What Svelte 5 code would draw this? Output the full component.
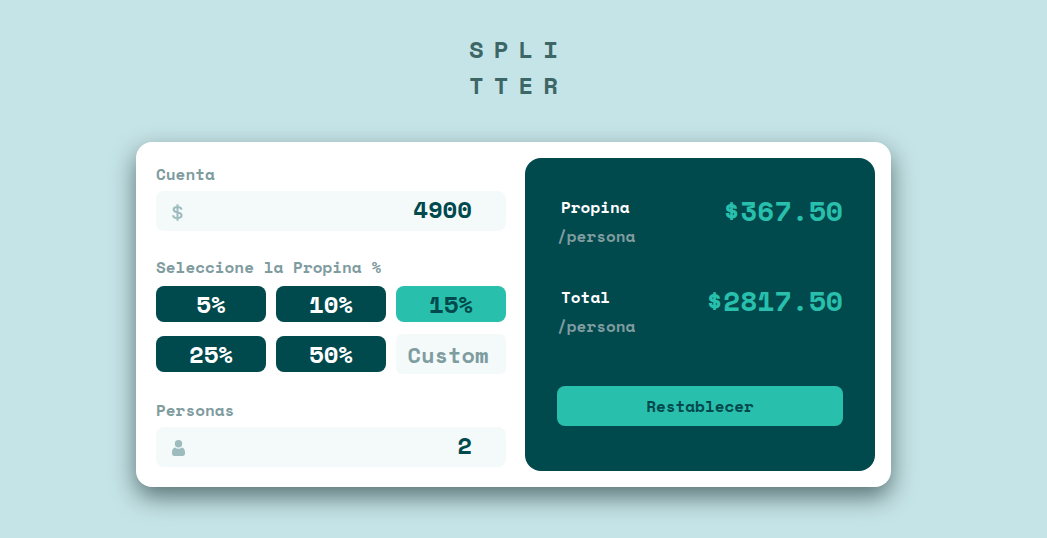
<script>
  let bill = $state(4900);
  let people = $state(2);
  let tip = $state(15);
  let custom = $state('');

  const tips = [5, 10, 15, 25, 50];

  let rate = $derived((custom === '' || custom === null ? tip : Number(custom)) / 100);
  let tipEach = $derived(people > 0 ? (bill * rate) / people : 0);
  let totalEach = $derived(people > 0 ? bill / people + tipEach : 0);

  function choose(value) {
    tip = value;
    custom = '';
  }

  function reset() {
    bill = 0;
    people = 1;
    tip = 0;
    custom = '';
  }
</script>

<main class="page">
  <h1 class="logo">SPLI<br />TTER</h1>

  <div class="card">
    <form class="form" onsubmit={(e) => e.preventDefault()}>
      <div class="group">
        <label class="label" for="bill">Cuenta</label>
        <div class="field">
          <svg class="icon" width="11" height="17" viewBox="0 0 11 17" aria-hidden="true">
            <path
              d="M9.500 5.700C9.300 3.800 7.800 3 5.500 3 3.200 3 1.600 3.900 1.600 5.600c0 1.800 1.600 2.400 3.900 2.800 2.500.4 4.100 1.100 4.100 2.900 0 1.800-1.700 2.800-4.100 2.800S1.200 13.200 1.100 11.200M5.500 .3v16.500"
              fill="none"
              stroke="currentColor"
              stroke-width="2"
            />
          </svg>
          <input id="bill" type="number" min="0" bind:value={bill} />
        </div>
      </div>

      <fieldset class="group">
        <legend class="label">Seleccione la Propina %</legend>
        <div class="tips">
          {#each tips as value}
            <button
              type="button"
              class="tip"
              class:active={tip === value}
              aria-pressed={tip === value}
              onclick={() => choose(value)}>{value}%</button
            >
          {/each}
          <input class="custom" type="number" min="0" placeholder="Custom" aria-label="Custom" bind:value={custom} />
        </div>
      </fieldset>

      <div class="group">
        <label class="label" for="people">Personas</label>
        <div class="field">
          <svg class="icon" width="13" height="16" viewBox="0 0 13 16" aria-hidden="true">
            <circle cx="6.500" cy="3.700" r="3.700" fill="currentColor" />
            <path
              d="M3.100 7.500C1.200 7.900 0 9.700 0 12.300v1.300C0 15 .9 16 2.300 16h8.400c1.400 0 2.300-1 2.300-2.400v-1.300c0-2.600-1.200-4.400-3.100-4.800-.9.800-2.100 1.200-3.400 1.200S4 8.300 3.100 7.500z"
              fill="currentColor"
            />
          </svg>
          <input id="people" type="number" min="1" bind:value={people} />
        </div>
      </div>
    </form>

    <section class="panel">
      <div class="result">
        <div>
          <p class="name">Propina</p>
          <p class="unit">/persona</p>
        </div>
        <output class="amount" for="bill people">${tipEach.toFixed(2)}</output>
      </div>
      <div class="result">
        <div>
          <p class="name">Total</p>
          <p class="unit">/persona</p>
        </div>
        <output class="amount" for="bill people">${totalEach.toFixed(2)}</output>
      </div>
      <button type="button" class="reset" onclick={reset}>Restablecer</button>
    </section>
  </div>
</main>

<style>
  :global(body) {
    background: #c5e4e7;
  }

  .page,
  .page * {
    box-sizing: border-box;
  }

  .page {
    display: flex;
    flex-direction: column;
    align-items: center;
    gap: 39px;
    padding: 31px 20px 48px 0;
    font: bold 16px/24px "Space Mono", "Liberation Mono", monospace;
    color: #00494d;
  }

  input,
  button {
    font: inherit;
    color: inherit;
    border: 0;
    min-width: 0;
  }

  input {
    appearance: textfield;
  }

  input::-webkit-inner-spin-button {
    appearance: none;
    margin: 0;
  }

  button {
    cursor: pointer;
    padding: 0;
  }

  p {
    margin: 0;
  }

  .logo {
    margin: 0;
    padding-left: 10px;
    font-size: 24px;
    line-height: 36px;
    letter-spacing: 10px;
    color: #3d6666;
  }

  .card {
    display: grid;
    grid-template-columns: repeat(2, minmax(0, 1fr));
    gap: 19px;
    width: 100%;
    max-width: 755px;
    padding: 16px 16px 16px 20px;
    background: #fff;
    border-radius: 16px;
    box-shadow: 0 10px 25px rgba(0, 20, 20, 0.55);
  }

  .form {
    display: flex;
    flex-direction: column;
    gap: 24px;
    padding: 4px 0;
  }

  .group {
    display: flex;
    flex-direction: column;
    gap: 5px;
    min-width: 0;
    margin: 0;
    padding: 0;
    border: 0;
  }

  .label {
    padding: 0;
    color: #7f9c9f;
  }

  .field {
    display: flex;
    align-items: center;
    height: 40px;
    padding: 0 34px 4px 16px;
    background: #f4fafa;
    border-radius: 8px;
  }

  .icon {
    flex: none;
    margin-top: 6px;
    color: #9ebbbd;
  }

  .field input {
    flex: 1;
    padding: 0;
    background: transparent;
    font-size: 24px;
    text-align: right;
  }

  .tips {
    display: grid;
    grid-template-columns: repeat(3, minmax(0, 1fr));
    align-items: center;
    gap: 12px 10px;
    padding-top: 7px;
  }

  .tip {
    height: 36px;
    border-radius: 8px;
    background: #00494d;
    color: #fff;
    font-size: 24px;
  }

  .tip.active {
    background: #28c0ac;
    color: #00494d;
  }

  .custom {
    width: 100%;
    height: 40px;
    padding: 0 16px 0 10px;
    border-radius: 6px;
    background: #f4fafa;
    font-size: 22px;
    text-align: center;
  }

  .custom::placeholder {
    color: #7f9c9f;
    opacity: 1;
  }

  .panel {
    display: flex;
    flex-direction: column;
    gap: 36px;
    padding: 37px 32px 45px;
    border-radius: 16px;
    background: #00494d;
  }

  .result {
    display: flex;
    justify-content: space-between;
    height: 54px;
  }

  .name {
    padding-left: 4px;
    margin-bottom: 5px;
    color: #fff;
  }

  .unit {
    color: #7f9c9f;
  }

  .amount {
    font-size: 28px;
    line-height: 32px;
    color: #28c0ac;
  }

  .reset {
    height: 40px;
    margin-top: auto;
    border-radius: 8px;
    background: #28c0ac;
  }

  @media (max-width: 640px) {
    .page {
      padding-right: 0;
    }

    .card {
      grid-template-columns: minmax(0, 1fr);
    }
  }
</style>
